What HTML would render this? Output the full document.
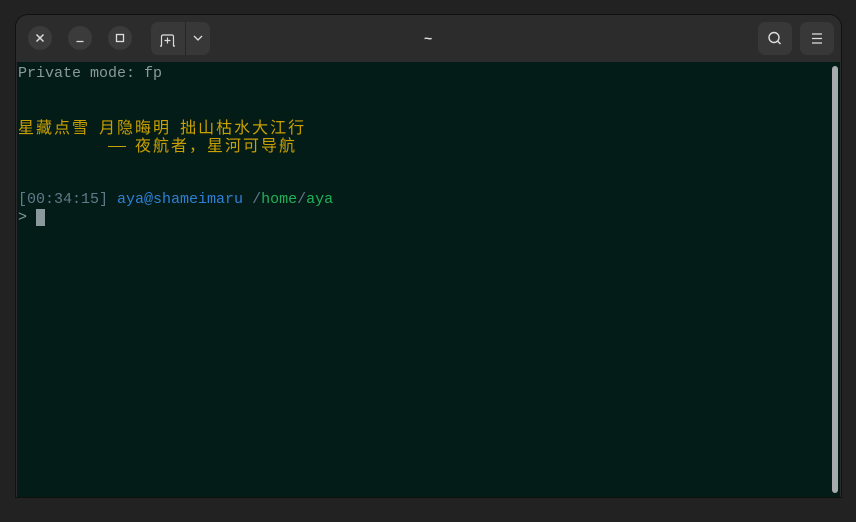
<html><head><style>
body{margin:0;width:856px;height:522px;background:#222;overflow:hidden;font-family:"Liberation Mono","Noto Sans CJK SC",monospace}
.win{position:absolute;left:16px;top:15px;width:825px;height:482px;border-radius:12px 12px 0 0;background:#2a2a2a;overflow:hidden;box-shadow:0 0 0 1px #111}
.hdr{position:absolute;left:0;top:0;width:100%;height:47px;background:#2c2c2c}
.term{position:absolute;left:1px;top:47px;width:823px;height:435px;background:#031c17}
.cb{position:absolute;top:11px;width:24px;height:24px;border-radius:50%;background:#3b3b3b}
.btn{position:absolute;top:7px;height:33px;border-radius:7px;background:#383838}
.row{position:absolute;left:1px;height:18px;line-height:18px;font-size:15px;white-space:pre}
.cj{color:#c9a000}
.c{font-family:"Noto Sans CJK SC",sans-serif;font-size:16px;letter-spacing:2px}
.sb{position:absolute;left:815px;top:4px;width:6px;height:427px;border-radius:3px;background:#a8abab}
</style></head><body>
<div class="win">
<div class="hdr">
<div class="cb" style="left:12px"></div><svg style="position:absolute;left:12px;top:11px" width="24" height="24"><path d="M8.5 8.5l7 7M15.5 8.5l-7 7" stroke="#ddd" stroke-width="1.5"/></svg>
<div class="cb" style="left:52px"></div><svg style="position:absolute;left:52px;top:11px" width="24" height="24"><path d="M8.5 15.5h7" stroke="#ddd" stroke-width="1.3"/></svg>
<div class="cb" style="left:92px"></div><svg style="position:absolute;left:92px;top:11px" width="24" height="24"><rect x="8.5" y="8.5" width="7" height="7" fill="none" stroke="#ddd" stroke-width="1.3"/></svg>
<div class="btn" style="left:135px;width:59px"></div>
<div style="position:absolute;left:169px;top:7px;width:1px;height:33px;background:#262626"></div>
<svg style="position:absolute;left:135px;top:7px" width="59" height="33"><path d="M10.5 24v-9.5a1.5 1.5 0 0 1 1.5-1.5h9a1.5 1.5 0 0 1 1.5 1.5V24M9 24h2M22 24h2M16.5 15.5v6M13.5 18.5h6" fill="none" stroke="#ddd" stroke-width="1.2"/><path d="M43 14l4 4 4-4" fill="none" stroke="#ddd" stroke-width="1.3"/></svg>
<div style="position:absolute;left:408px;top:15px;color:#ddd;font-family:'Liberation Sans',sans-serif;font-size:14px;font-weight:bold">~</div>
<div class="btn" style="left:742px;width:34px"></div>
<svg style="position:absolute;left:742px;top:7px" width="34" height="33"><circle cx="16" cy="15.5" r="5" fill="none" stroke="#ddd" stroke-width="1.4"/><path d="M19.5 19l3 3" stroke="#ddd" stroke-width="1.5"/></svg>
<div class="btn" style="left:784px;width:34px"></div>
<svg style="position:absolute;left:784px;top:7px" width="34" height="33"><path d="M12 12h10M12 16.5h10M12 21h10" stroke="#ddd" stroke-width="1.2"/></svg>
</div>
<div class="term">
<div class="row" style="top:3px;color:#8a9a98">Private mode: fp</div>
<div class="row cj" style="top:55px"><span class="c">星藏点雪</span> <span class="c">月隐晦明</span> <span class="c">拙山枯水大江行</span></div>
<div class="row cj" style="top:73px">          <span style="display:inline-block;width:18px;height:1px;background:#c9a000;vertical-align:middle;margin-top:-2px"></span> <span class="c">夜航者，星河可导航</span></div>
<div class="row" style="top:129px;color:#5f7a8a">[00:34:15] <span style="color:#2f7fd6">aya@shameimaru</span> /<span style="color:#22b05a">home</span>/<span style="color:#22b05a">aya</span></div>
<div class="row" style="top:147px;color:#8a9a98">&gt; <span style="display:inline-block;width:9px;height:17px;background:#8a9a9c;vertical-align:top"></span></div>
<div class="sb"></div>
</div>
</div>
</body></html>
